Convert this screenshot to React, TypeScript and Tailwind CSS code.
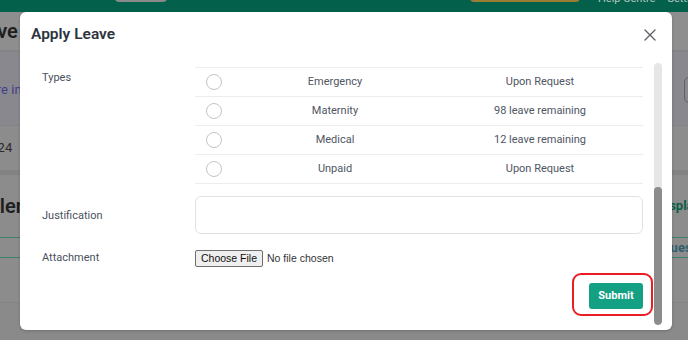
import React from "react";

const rows = [
  { name: "Emergency", status: "Upon Request" },
  { name: "Maternity", status: "98 leave remaining" },
  { name: "Medical", status: "12 leave remaining" },
  { name: "Unpaid", status: "Upon Request" },
];

function Background() {
  return (
    <div className="flex h-[340px] w-[688px] flex-col bg-[#8c8c8c] font-['Roboto',sans-serif]">
      {/* header */}
      <div className="flex h-[12px] shrink-0 overflow-hidden">
        <div className="w-[14px] bg-[#8a8a8a]" />
        <div className="w-[6px] bg-[#03604b] [clip-path:polygon(100%_0,100%_100%,0_100%)]" />
        <div className="relative flex flex-1 items-start whitespace-nowrap bg-[#03604b]">
          <div className="ml-[115px] mt-[-8px] h-[10px] w-[52px] shrink-0 rounded-[4px] bg-[#8a8a8a]" />
          <div className="ml-[303px] mt-[-8px] h-[10px] w-[110px] shrink-0 rounded-[4px] bg-[#9b7d32]" />
          <span className="ml-[18px] mt-[-7px] text-[11px] leading-[12px] text-[#b9c9c4]">Help Centre</span>
          <span className="ml-[12px] mt-[-7px] text-[11px] leading-[12px] text-[#b9c9c4]">Settings</span>
        </div>
      </div>
      {/* title row */}
      <div className="flex h-[40px] shrink-0 items-center justify-between whitespace-nowrap border-b-[2px] border-[#848484] bg-[#8e8e8e]">
        <span className="ml-[-35px] text-[20px] font-semibold text-[#1e1e1e]">Leave</span>
        <span />
      </div>
      {/* info row */}
      <div className="flex h-[73px] shrink-0 items-center justify-between whitespace-nowrap bg-[#88888e] pt-[2px]">
        <span className="ml-[-22px] text-[13px] text-[#3e3f8a]">more info</span>
        <div className="mr-[-20px] h-[26px] w-[24px] shrink-0 rounded-[5px] border border-[#5f5f70]" />
      </div>
      {/* date row */}
      <div className="flex h-[45px] shrink-0 items-center whitespace-nowrap border-t border-[#848484] bg-[#8c8c8c]">
        <span className="ml-[-17px] text-[13px] text-[#2b2b2b]">2024</span>
      </div>
      <div className="h-[5px] shrink-0 bg-[#838383]" />
      {/* calendar row */}
      <div className="flex h-[62px] shrink-0 items-center justify-between whitespace-nowrap bg-[#8c8c8c]">
        <span className="ml-[-24px] text-[20px] font-semibold text-[#1e1e1e]">Calen</span>
        <span className="mr-[-12px] text-[13px] font-bold text-[#0b5e49]">Display</span>
      </div>
      <div className="flex h-[21px] shrink-0 items-center justify-end whitespace-nowrap border-y border-[#3f7f70] bg-[#8c8c8c]">
        <span className="mr-[-8px] text-[13px] font-bold text-[#2f5f70]">Request</span>
      </div>
      <div className="h-[45px] shrink-0 border-b border-[#848484] bg-[#8c8c8c]" />
      <div className="flex-1 bg-[#8a8a8a]" />
    </div>
  );
}

function Radio() {
  return <span className="block h-[16px] w-[16px] rounded-full border border-[#c4c4c4] bg-white" />;
}

export default function App() {
  return (
    <div className="relative h-[340px] w-[688px] overflow-hidden">
      <Background />
      <div className="absolute left-[20px] top-[12px] flex h-[318px] w-[652px] flex-col rounded-[6px] bg-white font-['Roboto',sans-serif] shadow-[0_1px_3px_rgba(0,0,0,0.2)]">
        <div className="flex h-[46px] shrink-0 items-center justify-between pl-[11px] pr-[16px]">
          <h2 className="text-[15.5px] font-semibold text-[#2d3440]">Apply Leave</h2>
          <svg width="12" height="12" viewBox="0 0 12 12" fill="none" stroke="#5f6368" strokeWidth="1.4" strokeLinecap="round">
            <path d="M1 1L11 11M11 1L1 11" />
          </svg>
        </div>
        <div className="flex flex-1">
          <div className="w-[623px] pl-[22px] pt-[9px]">
            <div className="flex">
              <div className="w-[153px] pt-[3px] text-[11px] text-[#4a5160]">Types</div>
              <div className="w-[448px] border-t border-[#ededed]">
                {rows.map((r) => (
                  <div key={r.name} className="flex h-[29px] items-center border-b border-[#ededed] text-[11px] text-[#4f5663]">
                    <div className="flex w-[38px] justify-center">
                      <Radio />
                    </div>
                    <div className="w-[204px] text-center">{r.name}</div>
                    <div className="flex-1 text-center">{r.status}</div>
                  </div>
                ))}
              </div>
            </div>
            <div className="mt-[12px] flex items-center">
              <div className="w-[153px] pt-[3px] text-[11px] text-[#4a5160]">Justification</div>
              <div className="h-[38px] w-[448px] rounded-[6px] border border-[#e2e2e2]" />
            </div>
            <div className="mt-[12px] flex h-[25px] items-center">
              <div className="w-[153px] text-[11px] text-[#4a5160]">Attachment</div>
              <div className="flex items-center font-['Liberation_Sans',sans-serif] text-[10.5px]">
                <span className="flex h-[17px] items-center rounded-[2px] border border-[#6e6e6e] bg-[#efefef] px-[5px] text-[#111]">Choose File</span>
                <span className="ml-[4px] text-[#333]">No file chosen</span>
              </div>
            </div>
            <div className="mt-[12px] flex justify-end">
              <div className="relative">
                <button className="flex h-[26px] w-[54px] items-center justify-center rounded-[3px] bg-[#13a083] text-[11px] font-bold text-white">
                  Submit
                </button>
                <div className="pointer-events-none absolute -bottom-[7px] -left-[17px] -right-[10px] -top-[10px] rounded-[9px] border-[2.5px] border-[#ec1c24]" />
              </div>
            </div>
          </div>
          <div className="my-[5px] ml-[11px] flex w-[8px] flex-col overflow-hidden rounded-full bg-[#e6e6e6]">
            <div className="h-[124px]" />
            <div className="flex-1 rounded-full bg-[#8c8c8c]" />
          </div>
        </div>
      </div>
    </div>
  );
}
